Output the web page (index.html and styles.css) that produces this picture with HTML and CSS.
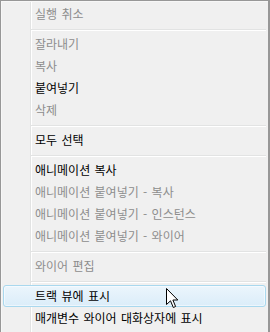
FILE: index.html
```html
<!DOCTYPE html>
<html lang="ko">
<head>
    <meta charset="UTF-8">
    <meta name="viewport" content="width=device-width, initial-scale=1.0">
    <title>Context Menu</title>
    <link rel="stylesheet" href="styles.css">
</head>
<body>
    <div class="menu">
        <div class="item disabled">실행 취소</div>
        <div class="sep"></div>
        <div class="item disabled">잘라내기</div>
        <div class="item disabled">복사</div>
        <div class="item">붙여넣기</div>
        <div class="item disabled">삭제</div>
        <div class="sep"></div>
        <div class="item">모두 선택</div>
        <div class="sep"></div>
        <div class="item">애니메이션 복사</div>
        <div class="item disabled">애니메이션 붙여넣기 - 복사</div>
        <div class="item disabled">애니메이션 붙여넣기 - 인스턴스</div>
        <div class="item disabled">애니메이션 붙여넣기 - 와이어</div>
        <div class="sep"></div>
        <div class="item disabled">와이어 편집</div>
        <div class="sep"></div>
        <div class="item hover">트랙 뷰에 표시
            <svg class="cursor" width="13" height="21" viewBox="0 0 13 21">
                <path d="M0.5 0.5 V16.5 L4.5 12.8 L7.3 19.5 L9.6 18.5 L6.9 12 H11.8 Z" fill="#fff" stroke="#000" stroke-width="1" stroke-linejoin="miter"/>
            </svg>
        </div>
        <div class="item">매개변수 와이어 대화상자에 표시</div>
    </div>
</body>
</html>
```

FILE: styles.css
```css
body {
    margin: 0;
    padding: 0;
    background: #f0f0f0;
    font-family: "Noto Sans CJK KR", "Noto Sans", sans-serif;
}
.menu {
    position: relative;
    width: 263px;
    height: 340px;
    padding: 2px 2px 0 2px;
    border-top: 1px solid #979797;
    border-left: 1px solid #979797;
    border-right: 2px solid #979797;
    background:
        linear-gradient(to right, transparent 29px, #e2e3e3 29px, #e2e3e3 30px, #fff 30px, #fff 31px, transparent 31px) no-repeat,
        #f0f0f0;
    box-shadow: inset 1px 1px 0 #f7f7f7;
}
.item {
    position: relative;
    height: 20px;
    line-height: 20px;
    padding-left: 31px;
    border: 1px solid transparent;
    border-radius: 3px;
    font-size: 12px;
    word-spacing: 1px;
    color: #000;
    white-space: nowrap;
}
.item.disabled {
    color: #8d8d8d;
}
.item.hover {
    border-color: #a9d8ee;
    background: linear-gradient(#ebf5fc, #dbedf9);
    box-shadow: inset 0 0 0 1px rgba(255, 255, 255, 0.5);
}
.sep {
    height: 8px;
    margin-left: 28px;
    margin-right: 0;
    background: linear-gradient(to bottom, transparent 4px, #e2e3e3 4px, #e2e3e3 5px, #fff 5px, #fff 6px, transparent 6px);
}
.cursor {
    position: absolute;
    left: 162px;
    top: 2px;
}
```
